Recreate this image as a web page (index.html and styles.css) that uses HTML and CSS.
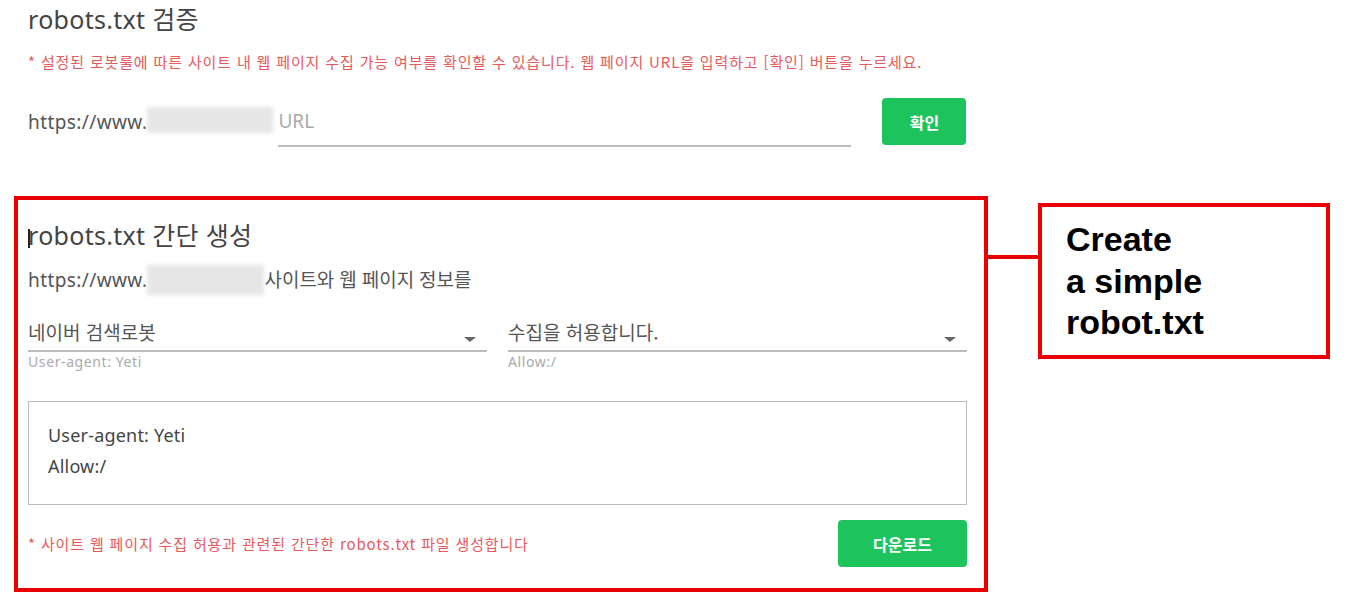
FILE: index.html
```html
<!DOCTYPE html>
<html lang="ko">
<head>
    <meta charset="UTF-8">
    <title>robots.txt</title>
    <link rel="stylesheet" href="styles.css">
</head>
<body>
    <div class="page">
        <section class="check">
            <h2 class="title">robots.txt 검증</h2>
            <p class="note">* 설정된 로봇룰에 따른 사이트 내 웹 페이지 수집 가능 여부를 확인할 수 있습니다. 웹 페이지 URL을 입력하고 [확인] 버튼을 누르세요.</p>
            <div class="url-row">
                <span class="prefix">https://www.</span><span class="blur blur-top"></span>
                <div class="url-input">URL</div>
                <button class="btn btn-check">확인</button>
            </div>
        </section>

        <div class="annotated">
            <section class="gen">
                <h2 class="title"><span class="caret"></span>robots.txt 간단 생성</h2>
                <p class="site"><span class="prefix">https://www.</span><span class="blur blur-gen"></span>사이트와 웹 페이지 정보를</p>
                <div class="selects">
                    <div class="field">
                        <div class="select">네이버 검색로봇<span class="arrow"></span></div>
                        <div class="helper">User-agent: Yeti</div>
                    </div>
                    <div class="field">
                        <div class="select">수집을 허용합니다.<span class="arrow"></span></div>
                        <div class="helper">Allow:/</div>
                    </div>
                </div>
                <div class="output">
                    <div>User-agent: Yeti</div>
                    <div>Allow:/</div>
                </div>
                <div class="foot">
                    <p class="note">* 사이트 웹 페이지 수집 허용과 관련된 간단한 robots.txt 파일 생성합니다</p>
                    <button class="btn btn-down">다운로드</button>
                </div>
            </section>
            <div class="connector"></div>
            <div class="callout">Create<br>a simple<br>robot.txt</div>
        </div>
    </div>
</body>
</html>
```

FILE: styles.css
```css
body {
    margin: 0;
    background: #fff;
    font-family: "Noto Sans", "Noto Sans CJK KR", sans-serif;
    color: #555;
}
.page {
    padding: 0 0 0 14px;
}
.check {
    width: 939px;
    padding: 4px 0 0 14px;
}
.title {
    margin: 0;
    font-size: 25px;
    font-weight: 400;
    color: #444;
    line-height: 30px;
    letter-spacing: 0.3px;
}
.note {
    margin: 0;
    font-size: 15px;
    line-height: 20px;
    color: #e65a5c;
    font-family: "Noto Sans CJK KR", sans-serif;
    letter-spacing: 0.85px;
}
.check .note {
    margin-top: 18px;
}
.url-row {
    display: flex;
    align-items: flex-start;
    margin-top: 26px;
}
.prefix {
    font-size: 19px;
    line-height: 26px;
    letter-spacing: 0.4px;
    color: #555;
}
.url-row .prefix {
    margin-top: 11px;
}
.blur {
    display: inline-block;
    background: #e6e6e6;
    filter: blur(2px);
}
.blur-top {
    width: 126px;
    height: 26px;
    margin-top: 9px;
}
.url-input {
    width: 573px;
    margin: 0 31px 0 5px;
    padding: 10px 0 11px;
    font-size: 19px;
    line-height: 26px;
    color: #aaa;
    border-bottom: 2px solid #bbb;
}
.btn {
    border: none;
    border-radius: 4px;
    background: #1dc35d;
    color: #fff;
    font-family: "Noto Sans CJK KR", sans-serif;
    font-weight: 700;
    font-size: 16px;
    height: 47px;
}
.btn-check {
    width: 84px;
}
.annotated {
    display: flex;
    align-items: flex-start;
    margin-top: 49px;
}
.gen {
    width: 939px;
    border: 4px solid #ea0000;
    padding: 20px 17px 21px 10px;
}
.caret {
    display: inline-block;
    width: 2px;
    height: 19px;
    background: #222;
    vertical-align: -3px;
    margin-right: -2px;
}
.site {
    margin: 15px 0 0;
    display: flex;
    align-items: center;
    font-size: 19px;
    line-height: 30px;
    color: #555;
}
.blur-gen {
    width: 117px;
    height: 30px;
}
.selects {
    display: flex;
    gap: 21px;
    margin-top: 24px;
}
.field {
    flex: 1;
}
.select {
    position: relative;
    font-size: 19px;
    line-height: 26px;
    color: #555;
    padding-bottom: 5px;
    border-bottom: 2px solid #bbb;
    font-family: "Noto Sans CJK KR", sans-serif;
}
.arrow {
    position: absolute;
    right: 11px;
    top: 18px;
    border-left: 6px solid transparent;
    border-right: 6px solid transparent;
    border-top: 5px solid #666;
}
.helper {
    font-size: 14px;
    line-height: 16px;
    letter-spacing: 0.6px;
    color: #aaa;
    margin-top: 2px;
}
.output {
    margin-top: 31px;
    height: 104px;
    border: 1px solid #bbb;
    padding: 18px 19px 0;
    box-sizing: border-box;
    font-size: 18px;
    line-height: 31px;
    letter-spacing: 0.2px;
    color: #444;
}
.foot {
    display: flex;
    justify-content: space-between;
    align-items: center;
    margin-top: 15px;
}
.btn-down {
    width: 129px;
}
.connector {
    width: 50px;
    height: 4px;
    background: #ea0000;
    margin-top: 59px;
}
.callout {
    margin-top: 7px;
    width: 292px;
    height: 156px;
    box-sizing: border-box;
    border: 4px solid #ea0000;
    padding: 12px 0 0 24px;
    font-family: "Liberation Sans", Arial, sans-serif;
    font-weight: 700;
    font-size: 34px;
    line-height: 41.5px;
    color: #000;
}
```
